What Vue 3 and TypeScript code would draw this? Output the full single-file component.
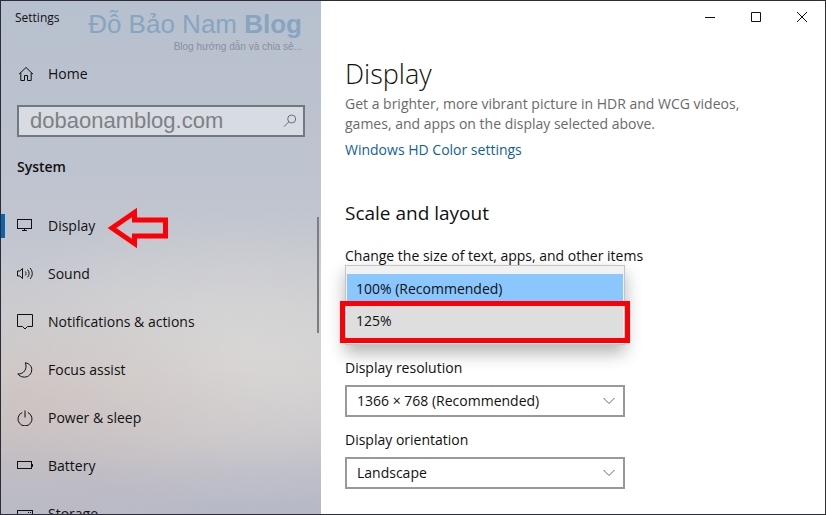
<script setup lang="ts">
import { ref } from 'vue'

interface NavItem {
  id: string
  label: string
}

const navItems: NavItem[] = [
  { id: 'display', label: 'Display' },
  { id: 'sound', label: 'Sound' },
  { id: 'notifications', label: 'Notifications & actions' },
  { id: 'focus', label: 'Focus assist' },
  { id: 'power', label: 'Power & sleep' },
  { id: 'battery', label: 'Battery' },
  { id: 'storage', label: 'Storage' },
]

const scales: string[] = ['100% (Recommended)', '125%']

const activeItem = ref('display')
const query = ref('dobaonamblog.com')
const scale = ref(scales[0])
const resolution = ref('1366 × 768 (Recommended)')
const orientation = ref('Landscape')
</script>

<template>
  <div class="window">
    <aside class="sidebar">
      <header class="side-head">
        <span class="app-title">Settings</span>
        <div class="brand">
          <div class="brand-name">Đỗ Bảo Nam <strong>Blog</strong></div>
          <div class="brand-tag">Blog hướng dẫn và chia sẻ...</div>
        </div>
      </header>

      <a class="home" href="#home">
        <svg class="icon" viewBox="0 0 16 16">
          <path d="M1 8.2 8 1.5l7 6.7M2.8 6.8v7.7h3.7V9.5h3v5h3.7V6.8" />
        </svg>
        Home
      </a>

      <form class="search" role="search" @submit.prevent>
        <input v-model="query" type="text" aria-label="Find a setting" />
        <button type="submit" aria-label="Search">
          <svg viewBox="0 0 14 14">
            <circle cx="8.7" cy="5" r="4" />
            <path d="M5.8 7.8 1 12.7" />
          </svg>
        </button>
      </form>

      <h2 class="section">System</h2>

      <div class="nav-area">
        <nav>
          <a
            v-for="item in navItems"
            :key="item.id"
            class="nav-item"
            :class="{ active: item.id === activeItem }"
            :href="'#' + item.id"
            @click="activeItem = item.id"
          >
            <svg class="icon" viewBox="0 0 16 16">
              <g v-if="item.id === 'display'" shape-rendering="crispEdges">
                <path d="M.5 1.5h14v9H.5zM7.5 10.5v2M5 12.5h5" />
              </g>
              <g v-else-if="item.id === 'sound'">
                <path d="M.5 5h2.300L5.500 2.500v10l-2.700-2.500H.5zM8.300 5.500c1 1.300 1 2.700 0 4M10.600 3.700c2 2.400 2 5.200 0 7.600M13 2c3 3.400 3 7.600 0 11" />
              </g>
              <g v-else-if="item.id === 'notifications'">
                <path d="M.5 .5h15v12h-5L8 15l-2.500-2.500h-5z" />
              </g>
              <g v-else-if="item.id === 'focus'">
                <path d="M8.300.8C13 1.500 15.300 5 14.600 9c-.8 4.300-4.600 6.700-8.600 6-2.300-.4-4-1.500-5.200-3.100C6.500 12.500 10.800 7 8.300.8z" />
              </g>
              <g v-else-if="item.id === 'power'">
                <path d="M5.200 2.500a7 7 0 1 0 5.600 0M8 .5v7" />
              </g>
              <g v-else-if="item.id === 'battery'" shape-rendering="crispEdges">
                <path d="M.5 3.500h14v7H.5zM15.500 5.500v3" />
              </g>
              <g v-else shape-rendering="crispEdges">
                <path d="M.5 12.500v-8h15v8zM11 6.500h1M13 6.500h1M.5 9.500h15" />
              </g>
            </svg>
            <span>{{ item.label }}</span>
            <svg v-if="item.id === 'display'" class="pointer" viewBox="0 0 62 46">
              <path d="M5 25 27.500 9.500V17H58.500v16H27.500v7.500z" />
            </svg>
          </a>
        </nav>
        <div class="scrollbar"></div>
      </div>
    </aside>

    <main class="main">
      <div class="controls">
        <button type="button" aria-label="Minimize">
          <svg viewBox="0 0 12 12"><path d="M1 6.500h10" /></svg>
        </button>
        <button type="button" aria-label="Maximize">
          <svg viewBox="0 0 12 12"><path d="M1.500 1.500h9v9h-9z" /></svg>
        </button>
        <button type="button" aria-label="Close">
          <svg viewBox="0 0 12 12"><path d="m1 1 10 10M11 1 1 11" /></svg>
        </button>
      </div>

      <div class="content">
        <h1>Display</h1>
        <p class="lead">
          Get a brighter, more vibrant picture in HDR and WCG videos, games, and apps on the display
          selected above.
        </p>
        <a class="link" href="#hd-color">Windows HD Color settings</a>

        <h2>Scale and layout</h2>

        <div class="field">
          <span id="scale-label" class="label">Change the size of text, apps, and other items</span>
          <div class="popup" role="listbox" aria-labelledby="scale-label">
            <button
              v-for="option in scales"
              :key="option"
              type="button"
              role="option"
              class="option"
              :class="{ selected: option === scale }"
              :aria-selected="option === scale"
              @click="scale = option"
            >
              {{ option }}
            </button>
            <div class="highlight"></div>
          </div>
        </div>

        <div class="field">
          <label class="label" for="resolution">Display resolution</label>
          <div class="select">
            <select id="resolution" v-model="resolution">
              <option>1366 × 768 (Recommended)</option>
            </select>
            <svg viewBox="0 0 12 8"><path d="m.5 1 5.500 5.500L11.500 1" /></svg>
          </div>
        </div>

        <div class="field">
          <label class="label" for="orientation">Display orientation</label>
          <div class="select">
            <select id="orientation" v-model="orientation">
              <option>Landscape</option>
            </select>
            <svg viewBox="0 0 12 8"><path d="m.5 1 5.500 5.500L11.500 1" /></svg>
          </div>
        </div>
      </div>
    </main>
  </div>
</template>

<style>
body {
  margin: 0;
}
</style>

<style scoped>
* {
  box-sizing: border-box;
}

.window {
  display: flex;
  height: 100vh;
  overflow: hidden;
  border: 1px solid #2c2c38;
  background: #fff;
  color: #111;
  font: 14px/20px 'Open Sans', 'Noto Sans', sans-serif;
}

button,
input,
select {
  margin: 0;
  border: 0;
  border-radius: 0;
  background: none;
  color: inherit;
  font: inherit;
}

a {
  color: inherit;
  text-decoration: none;
}

svg {
  fill: none;
  stroke: currentColor;
}

.sidebar {
  display: flex;
  flex: 0 0 320px;
  flex-direction: column;
  overflow: hidden;
  background:
    radial-gradient(ellipse 260px 130px at 10% 80%, rgba(206, 190, 186, 0.5), transparent),
    radial-gradient(ellipse 280px 150px at 75% 69%, rgba(220, 218, 216, 0.75), transparent),
    linear-gradient(#b7c0ce 0%, #bcc3cf 25%, #c1c5cf 45%, #cacbd0 60%, #cecccd 72%, #c6c3c8 84%, #babbc7 92%, #b7bac6 100%);
}

.side-head {
  display: flex;
  justify-content: space-between;
  padding: 7px 19px 0 14px;
}

.app-title {
  font-size: 12px;
}

.brand {
  color: #86a5c0;
  font-family: 'Liberation Sans', Arial, sans-serif;
  text-align: right;
}

.brand-name {
  font-size: 26px;
  line-height: 32px;
}

.brand-tag {
  color: #8790a0;
  font-size: 10px;
  line-height: 14px;
}

.home {
  display: flex;
  align-items: center;
  gap: 14px;
  height: 40px;
  padding-left: 17px;
}

.icon {
  flex: none;
  width: 16px;
  height: 16px;
}

.search {
  display: flex;
  flex: none;
  height: 32px;
  margin: 11px 16px 0;
  border: 2px solid #737780;
  background: #d7dbe2;
}

.search input {
  flex: 1;
  min-width: 0;
  padding: 0 11px;
  outline: 0;
  color: #7e8083;
  font: 22px/28px 'Liberation Sans', Arial, sans-serif;
}

.search button {
  display: grid;
  place-items: center;
  width: 26px;
  padding: 0;
  color: #6c7078;
}

.search svg {
  width: 14px;
  height: 14px;
}

.section {
  margin: 20px 16px 0;
  font-size: 14px;
  font-weight: 600;
  line-height: 20px;
}

.nav-area {
  display: flex;
  flex: 1;
  min-height: 0;
  padding: 25px 2px 0 0;
}

nav {
  flex: 1;
}

.nav-item {
  display: flex;
  align-items: center;
  height: 48px;
  background: linear-gradient(#0f63ac, #0f63ac) left center / 0 24px no-repeat;
  padding-left: 16px;
}

.nav-item.active {
  background-size: 4px 24px;
}

.nav-item span {
  margin-left: 15px;
}

.pointer {
  width: 62px;
  height: 46px;
  margin-left: 12px;
  stroke: #fb0007;
  stroke-width: 5px;
}

.scrollbar {
  width: 2px;
  height: 116px;
  margin-top: 15px;
  background: #7d7e82;
}

.main {
  flex: 1;
  min-width: 0;
}

.controls {
  display: flex;
  justify-content: flex-end;
}

.controls button {
  display: grid;
  place-items: center;
  width: 46px;
  height: 32px;
  padding: 0;
}

.controls svg {
  width: 12px;
  height: 12px;
}

.content {
  padding: 21px 56px 0 24px;
}

h1 {
  margin: 0;
  font-size: 27px;
  font-weight: 300;
  line-height: 40px;
}

.lead {
  max-width: 420px;
  margin: 0 0 6px;
  color: #6a6a6a;
}

.link {
  display: block;
  color: #0f5f9f;
}

h2 {
  margin: 39px 0 17px;
  font-size: 19px;
  font-weight: 400;
  line-height: 28px;
}

.field {
  width: 100%;
  max-width: 280px;
  margin-bottom: 11px;
}

.label {
  display: block;
  line-height: 24px;
  white-space: nowrap;
}

.popup {
  position: relative;
  display: grid;
  margin-top: -3px;
  border: 1px solid #c4c4c4;
  background: #f2f2f2;
  padding: 8px 1px 6px;
  box-shadow: 0 8px 16px rgba(0, 0, 0, 0.3);
}

.option {
  height: 32px;
  background: #dedede;
  padding: 0 9px 2px;
  text-align: left;
}

.option.selected {
  background: #8ac7ff;
}

/* Callout frame around the second option */
.highlight {
  position: absolute;
  right: -6px;
  bottom: 1px;
  left: -6px;
  height: 42px;
  border: 5px solid #fb0007;
  pointer-events: none;
}

.select {
  display: grid;
  align-items: center;
  margin-top: 5px;
}

.select select {
  grid-area: 1 / 1;
  width: 100%;
  height: 32px;
  border: 2px solid #999;
  padding: 0 32px 0 10px;
  appearance: none;
}

.select svg {
  grid-area: 1 / 1;
  justify-self: end;
  width: 12px;
  height: 8px;
  margin-right: 10px;
  color: #666;
  pointer-events: none;
}
</style>
